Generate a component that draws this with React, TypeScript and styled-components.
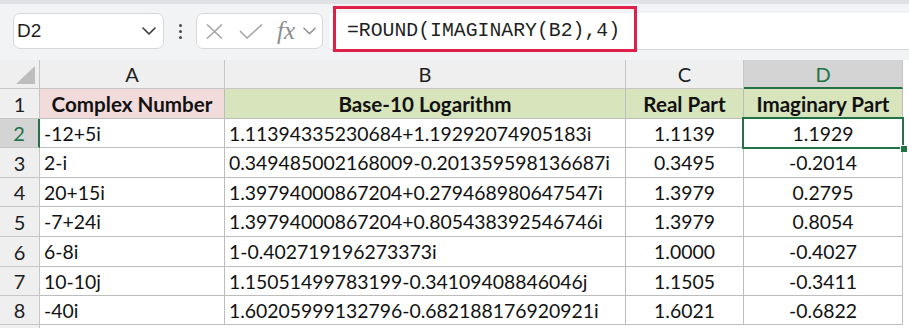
import React from 'react';
import styled, { createGlobalStyle } from 'styled-components';

const Global = createGlobalStyle`
  html, body { margin: 0; padding: 0; background: #ffffff; }
  body { width: 909px; height: 328px; overflow: hidden; font-family: Lato, "Open Sans", sans-serif; }
`;

const Shell = styled.div`
  width: 909px;
  height: 328px;
  display: flex;
  flex-direction: column;
  overflow: hidden;
  background: #ffffff;
`;

const Toolbar = styled.div`
  position: relative;
  height: 60px;
  box-sizing: border-box;
  flex: none;
  background: #f1f3f5;
  border-top: 4px solid #dfe1e4;
  display: flex;
  align-items: flex-start;
  padding: 9px 0 0 13px;
`;

const NameBox = styled.div`
  width: 151px;
  height: 36px;
  box-sizing: border-box;
  background: #fff;
  border: 1px solid #d6d8db;
  border-radius: 7px;
  display: flex;
  align-items: center;
  justify-content: space-between;
  padding: 0 7px 0 3px;
  font-family: "Liberation Sans", Arial, sans-serif;
  font-size: 19px;
  color: #1e1e1e;
`;

const Dots = styled.div`
  width: 32px;
  height: 36px;
  display: flex;
  flex-direction: column;
  align-items: center;
  justify-content: center;
  gap: 3px;
  & > span {
    width: 3px;
    height: 3px;
    border-radius: 50%;
    background: #4a4a4a;
  }
`;

const FxBox = styled.div`
  width: 127px;
  height: 36px;
  box-sizing: border-box;
  background: #fff;
  border: 1px solid #d6d8db;
  border-radius: 7px;
  display: flex;
  align-items: center;
  padding-left: 9px;
`;

const FxText = styled.span`
  font-family: "Liberation Serif", "Times New Roman", serif;
  font-style: italic;
  font-size: 25px;
  color: #8d8d8d;
  margin-left: 14px;
`;

const FormulaField = styled.div`
  flex: 1;
  height: 37px;
  margin-left: 7px;
  box-sizing: border-box;
  background: #fff;
  border-bottom: 1px solid #d3d5d8;
  display: flex;
  align-items: center;
  padding-left: 17px;
  font-family: "Liberation Mono", "Courier New", monospace;
  font-size: 19.8px;
  color: #1f1f1f;
`;

const Highlight = styled.div`
  position: absolute;
  left: 333px;
  top: 2px;
  width: 304px;
  height: 46px;
  box-sizing: border-box;
  border: 3px solid #e0204a;
  pointer-events: none;
`;

const Grid = styled.div`
  display: grid;
  grid-template-columns: 40px 185px 401px 118px 159px;
  grid-template-rows: 29px 30px 29px 30px 29px 30px 30px 29px 29px 10px;
  width: 903px;
  font-family: Lato, "Open Sans", sans-serif;
  font-size: 19.4px;
  color: #111;
`;

const ColHead = styled.div<{ $sel?: boolean }>`
  box-sizing: border-box;
  background: ${(p) => (p.$sel ? '#d4d4d4' : '#efefef')};
  color: ${(p) => (p.$sel ? '#217346' : '#1d1d1d')};
  border-right: 1px solid #c6c6c6;
  border-bottom: ${(p) => (p.$sel ? '2px solid #217346' : '1px solid #c6c6c6')};
  display: flex;
  align-items: center;
  justify-content: center;
  font-size: 20px;
  padding-top: ${(p) => (p.$sel ? '1px' : '0')};
`;

const Corner = styled.div`
  box-sizing: border-box;
  background: #efefef;
  border-right: 1px solid #c6c6c6;
  border-bottom: 1px solid #c6c6c6;
  display: flex;
  align-items: flex-end;
  justify-content: flex-end;
  padding: 0 4px 4px 0;
  & > span {
    width: 0;
    height: 0;
    border-style: solid;
    border-width: 0 0 18px 19px;
    border-color: transparent transparent #bdbdbd transparent;
  }
`;

const RowHead = styled.div<{ $sel?: boolean }>`
  box-sizing: border-box;
  background: ${(p) => (p.$sel ? '#d4d4d4' : '#efefef')};
  color: ${(p) => (p.$sel ? '#217346' : '#1d1d1d')};
  border-right: ${(p) => (p.$sel ? '2px solid #217346' : '1px solid #c6c6c6')};
  border-bottom: 1px solid #c6c6c6;
  display: flex;
  align-items: center;
  justify-content: center;
  font-size: 20px;
`;

const Cell = styled.div<{ $bg?: string; $align?: 'left' | 'center'; $bold?: boolean; $sel?: boolean }>`
  position: relative;
  box-sizing: border-box;
  background: ${(p) => p.$bg ?? '#fff'};
  border-right: 1px solid #bdbdbd;
  border-bottom: 1px solid #bdbdbd;
  display: flex;
  align-items: center;
  justify-content: ${(p) => (p.$align === 'center' ? 'center' : 'flex-start')};
  padding-left: ${(p) => (p.$align === 'center' ? '0' : '4px')};
  font-weight: ${(p) => (p.$bold ? 700 : 400)};
  font-size: ${(p) => (p.$bold ? '20.6px' : '19.4px')};
  white-space: nowrap;
  z-index: ${(p) => (p.$sel ? 3 : 'auto')};
`;

const SelectionFrame = styled.span`
  position: absolute;
  left: -2px;
  top: -2px;
  right: -2px;
  bottom: -2px;
  border: 2px solid #217346;
  pointer-events: none;
`;

const FillHandle = styled.span`
  position: absolute;
  right: -5px;
  bottom: -5px;
  width: 6px;
  height: 6px;
  background: #217346;
  box-shadow: -1px -1px 0 0 #ffffff;
`;

const Filler = styled.div`
  background: #efefef;
  border-right: 1px solid #c6c6c6;
`;

const PINK = '#f2dcdb';
const GREEN = '#d8e4bc';

const rows: [string, string, string, string][] = [
  ['-12+5i', '1.11394335230684+1.19292074905183i', '1.1139', '1.1929'],
  ['2-i', '0.349485002168009-0.201359598136687i', '0.3495', '-0.2014'],
  ['20+15i', '1.39794000867204+0.279468980647547i', '1.3979', '0.2795'],
  ['-7+24i', '1.39794000867204+0.805438392546746i', '1.3979', '0.8054'],
  ['6-8i', '1-0.402719196273373i', '1.0000', '-0.4027'],
  ['10-10j', '1.15051499783199-0.34109408846046j', '1.1505', '-0.3411'],
  ['-40i', '1.60205999132796-0.682188176920921i', '1.6021', '-0.6822'],
];

const Chevron = ({ w = 14, color = '#3a3a3a' }: { w?: number; color?: string }) => (
  <svg width={w} height={8} viewBox="0 0 14 8" fill="none">
    <path d="M1 1 L7 7 L13 1" stroke={color} strokeWidth="1.6" strokeLinecap="round" strokeLinejoin="round" />
  </svg>
);

const CrossIcon = () => (
  <svg width="17" height="15" viewBox="0 0 17 15" fill="none">
    <path d="M1 0.5 L16 14.5 M16 0.5 L1 14.5" stroke="#a3a3a3" strokeWidth="1.5" />
  </svg>
);

const CheckIcon = () => (
  <svg width="24" height="15" viewBox="0 0 24 15" fill="none" style={{ marginLeft: 16 }}>
    <path d="M1 7 L8 14 L23 0.5" stroke="#a3a3a3" strokeWidth="1.5" />
  </svg>
);

export default function App() {
  return (
    <Shell>
      <Global />
      <Toolbar>
        <NameBox>
          <span>D2</span>
          <Chevron />
        </NameBox>
        <Dots>
          <span />
          <span />
          <span />
        </Dots>
        <FxBox>
          <CrossIcon />
          <CheckIcon />
          <FxText>fx</FxText>
          <span style={{ marginLeft: 8, display: 'flex' }}>
            <Chevron w={13} color="#8d8d8d" />
          </span>
        </FxBox>
        <FormulaField>=ROUND(IMAGINARY(B2),4)</FormulaField>
        <Highlight />
      </Toolbar>
      <Grid>
        <Corner>
          <span />
        </Corner>
        <ColHead>A</ColHead>
        <ColHead>B</ColHead>
        <ColHead>C</ColHead>
        <ColHead $sel>D</ColHead>

        <RowHead>1</RowHead>
        <Cell $bg={PINK} $align="center" $bold>Complex Number</Cell>
        <Cell $bg={GREEN} $align="center" $bold>Base-10 Logarithm</Cell>
        <Cell $bg={GREEN} $align="center" $bold>Real Part</Cell>
        <Cell $bg={GREEN} $align="center" $bold>Imaginary Part</Cell>

        {rows.map((r, i) => (
          <React.Fragment key={i}>
            <RowHead $sel={i === 0}>{i + 2}</RowHead>
            <Cell>{r[0]}</Cell>
            <Cell>{r[1]}</Cell>
            <Cell $align="center">{r[2]}</Cell>
            <Cell $align="center" $sel={i === 0}>
              {r[3]}
              {i === 0 && (
                <>
                  <SelectionFrame />
                  <FillHandle />
                </>
              )}
            </Cell>
          </React.Fragment>
        ))}
        <Filler />
      </Grid>
    </Shell>
  );
}
